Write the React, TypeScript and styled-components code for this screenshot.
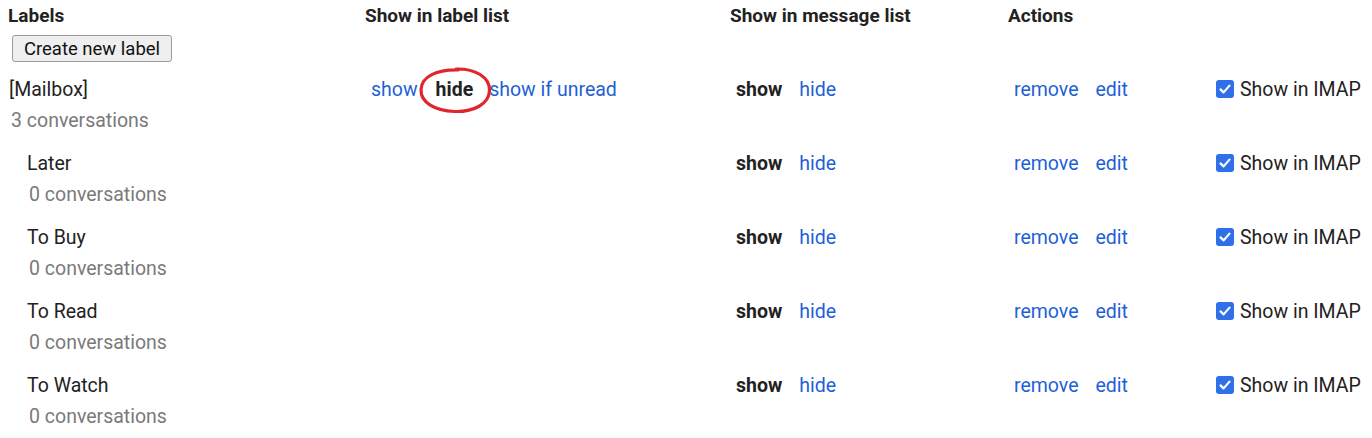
import React from 'react';
import styled, { createGlobalStyle } from 'styled-components';

const GlobalStyle = createGlobalStyle`
  html, body {
    margin: 0;
    padding: 0;
    background: #fff;
  }
  body {
    font-family: Roboto, "Liberation Sans", Arial, sans-serif;
    font-size: 19.5px;
    color: #222;
  }
`;

const columns = '357px 365px 278px 202px 1fr';

const Page = styled.div`
  padding-left: 8px;
  width: 1364px;
`;

const HeaderRow = styled.div`
  display: grid;
  grid-template-columns: ${columns};
  height: 30px;
  align-items: center;
`;

const HeaderCell = styled.div`
  font-weight: 700;
  font-size: 19px;
  color: #222;
  white-space: nowrap;
`;

const CreateButton = styled.button`
  margin: 5px 0 0 4px;
  height: 27px;
  width: 160px;
  padding: 0;
  font-family: Roboto, "Liberation Sans", Arial, sans-serif;
  font-size: 18.5px;
  color: #111;
  background: #efefef;
  border: 1px solid #9a9a9a;
  border-radius: 3px;
  display: block;
`;

const List = styled.div`
  padding-top: 6px;
`;

const Row = styled.div`
  display: grid;
  grid-template-columns: ${columns};
  align-items: start;
  padding: 6px 0;
  line-height: 31px;
`;

const NameCell = styled.div<{ $indent: number }>`
  padding-left: ${(p) => p.$indent}px;
`;

const LabelName = styled.div`
  color: #222;
  white-space: nowrap;
`;

const Count = styled.div`
  color: #7a7a7a;
  margin-left: 2px;
`;

const Cell = styled.div`
  display: flex;
  align-items: center;
  gap: 17px;
  padding-left: 6px;
  white-space: nowrap;
`;

const TextLink = styled.span`
  color: #1f5fd6;
  cursor: pointer;
`;

const Current = styled.span`
  position: relative;
  font-weight: 700;
  color: #222;
`;

const Circle = styled.svg`
  position: absolute;
  left: -17px;
  top: -7px;
  width: 72px;
  height: 46px;
  overflow: visible;
  pointer-events: none;
`;

const ImapCell = styled.label`
  display: flex;
  align-items: center;
  gap: 6px;
  padding-left: 6px;
  white-space: nowrap;
  color: #222;
`;

const CheckBox = styled.span`
  width: 18px;
  height: 18px;
  border-radius: 3px;
  background: #2f6fe8;
  display: inline-flex;
  align-items: center;
  justify-content: center;
  margin-top: -2px;
`;

type Label = {
  name: string;
  count: number;
  indent: number;
  labelList?: boolean;
};

const labels: Label[] = [
  { name: '[Mailbox]', count: 3, indent: 1, labelList: true },
  { name: 'Later', count: 0, indent: 19 },
  { name: 'To Buy', count: 0, indent: 19 },
  { name: 'To Read', count: 0, indent: 19 },
  { name: 'To Watch', count: 0, indent: 19 },
];

const Checked = () => (
  <CheckBox>
    <svg width="14" height="14" viewBox="0 0 14 14">
      <path d="M2.5 7.4 L5.6 10.4 L11.5 3.6" fill="none" stroke="#fff" strokeWidth="2.2" strokeLinecap="round" strokeLinejoin="round" />
    </svg>
  </CheckBox>
);

const LabelRow = ({ label }: { label: Label }) => (
  <Row>
    <NameCell $indent={label.indent}>
      <LabelName>{label.name}</LabelName>
      <Count>{label.count} conversations</Count>
    </NameCell>
    <Cell style={{ gap: 0 }}>
      {label.labelList && (
        <>
          <TextLink>show</TextLink>
          <Current style={{ margin: '0 16px 0 18px' }}>
            hide
            <Circle viewBox="0 0 72 46">
              <path
                d="M37 2 C56 1.5 71 10 70.5 23.5 C70 37 55 45 35.5 44.5 C16 44 1.5 35.5 2 22.5 C2.5 9.5 18 2.5 39 3"
                fill="none"
                stroke="#e0262c"
                strokeWidth="3.2"
                strokeLinecap="round"
              />
            </Circle>
          </Current>
          <TextLink>show if unread</TextLink>
        </>
      )}
    </Cell>
    <Cell>
      <Current>show</Current>
      <TextLink>hide</TextLink>
    </Cell>
    <Cell>
      <TextLink>remove</TextLink>
      <TextLink>edit</TextLink>
    </Cell>
    <ImapCell>
      <Checked />
      Show in IMAP
    </ImapCell>
  </Row>
);

const App = () => (
  <>
    <GlobalStyle />
    <Page>
      <HeaderRow>
        <HeaderCell>Labels</HeaderCell>
        <HeaderCell>Show in label list</HeaderCell>
        <HeaderCell>Show in message list</HeaderCell>
        <HeaderCell>Actions</HeaderCell>
        <div />
      </HeaderRow>
      <CreateButton>Create new label</CreateButton>
      <List>
        {labels.map((l) => (
          <LabelRow key={l.name} label={l} />
        ))}
      </List>
    </Page>
  </>
);

export default App;
